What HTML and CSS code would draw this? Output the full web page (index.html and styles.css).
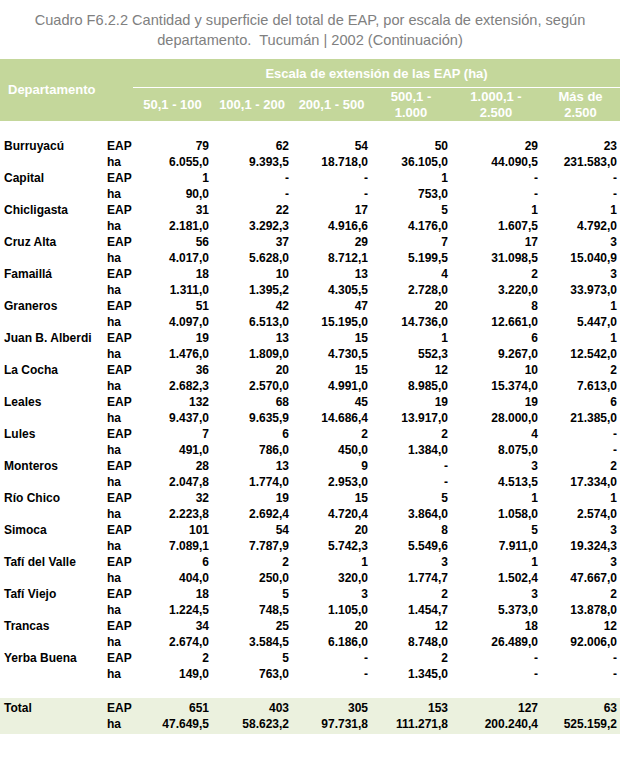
FILE: index.html
```html
<!DOCTYPE html>
<html lang="es">
<head>
<meta charset="utf-8">
<title>Cuadro F6.2.2</title>
<link rel="stylesheet" href="styles.css">
</head>
<body>
<div class="page">
  <h1 class="title">Cuadro F6.2.2 Cantidad y superficie del total de EAP, por escala de extensión, según<br>departamento.&nbsp; Tucumán | 2002 (Continuación)</h1>
  <table class="tbl">
    <colgroup>
      <col class="c-dep"><col class="c-unit"><col class="c-n1"><col class="c-n2"><col class="c-n3"><col class="c-n4"><col class="c-n5"><col class="c-n6">
    </colgroup>
    <thead>
      <tr class="h1">
        <th class="h-dep" rowspan="2" colspan="2">Departamento</th>
        <th class="h-scale" colspan="6">Escala de extensión de las EAP (ha)</th>
      </tr>
      <tr class="h2">
        <th>50,1 - 100</th>
        <th>100,1 - 200</th>
        <th>200,1 - 500</th>
        <th>500,1 -<br>1.000</th>
        <th>1.000,1 -<br>2.500</th>
        <th>Más de<br>2.500</th>
      </tr>
    </thead>
    <tbody>
      <tr class="blank top"><td colspan="8"></td></tr>
      <tr><td class="dep">Burruyacú</td><td class="unit">EAP</td><td>79</td><td>62</td><td>54</td><td>50</td><td>29</td><td>23</td></tr>
      <tr><td class="dep"></td><td class="unit">ha</td><td>6.055,0</td><td>9.393,5</td><td>18.718,0</td><td>36.105,0</td><td>44.090,5</td><td>231.583,0</td></tr>
      <tr><td class="dep">Capital</td><td class="unit">EAP</td><td>1</td><td>-</td><td>-</td><td>1</td><td>-</td><td>-</td></tr>
      <tr><td class="dep"></td><td class="unit">ha</td><td>90,0</td><td>-</td><td>-</td><td>753,0</td><td>-</td><td>-</td></tr>
      <tr><td class="dep">Chicligasta</td><td class="unit">EAP</td><td>31</td><td>22</td><td>17</td><td>5</td><td>1</td><td>1</td></tr>
      <tr><td class="dep"></td><td class="unit">ha</td><td>2.181,0</td><td>3.292,3</td><td>4.916,6</td><td>4.176,0</td><td>1.607,5</td><td>4.792,0</td></tr>
      <tr><td class="dep">Cruz Alta</td><td class="unit">EAP</td><td>56</td><td>37</td><td>29</td><td>7</td><td>17</td><td>3</td></tr>
      <tr><td class="dep"></td><td class="unit">ha</td><td>4.017,0</td><td>5.628,0</td><td>8.712,1</td><td>5.199,5</td><td>31.098,5</td><td>15.040,9</td></tr>
      <tr><td class="dep">Famaillá</td><td class="unit">EAP</td><td>18</td><td>10</td><td>13</td><td>4</td><td>2</td><td>3</td></tr>
      <tr><td class="dep"></td><td class="unit">ha</td><td>1.311,0</td><td>1.395,2</td><td>4.305,5</td><td>2.728,0</td><td>3.220,0</td><td>33.973,0</td></tr>
      <tr><td class="dep">Graneros</td><td class="unit">EAP</td><td>51</td><td>42</td><td>47</td><td>20</td><td>8</td><td>1</td></tr>
      <tr><td class="dep"></td><td class="unit">ha</td><td>4.097,0</td><td>6.513,0</td><td>15.195,0</td><td>14.736,0</td><td>12.661,0</td><td>5.447,0</td></tr>
      <tr><td class="dep">Juan B. Alberdi</td><td class="unit">EAP</td><td>19</td><td>13</td><td>15</td><td>1</td><td>6</td><td>1</td></tr>
      <tr><td class="dep"></td><td class="unit">ha</td><td>1.476,0</td><td>1.809,0</td><td>4.730,5</td><td>552,3</td><td>9.267,0</td><td>12.542,0</td></tr>
      <tr><td class="dep">La Cocha</td><td class="unit">EAP</td><td>36</td><td>20</td><td>15</td><td>12</td><td>10</td><td>2</td></tr>
      <tr><td class="dep"></td><td class="unit">ha</td><td>2.682,3</td><td>2.570,0</td><td>4.991,0</td><td>8.985,0</td><td>15.374,0</td><td>7.613,0</td></tr>
      <tr><td class="dep">Leales</td><td class="unit">EAP</td><td>132</td><td>68</td><td>45</td><td>19</td><td>19</td><td>6</td></tr>
      <tr><td class="dep"></td><td class="unit">ha</td><td>9.437,0</td><td>9.635,9</td><td>14.686,4</td><td>13.917,0</td><td>28.000,0</td><td>21.385,0</td></tr>
      <tr><td class="dep">Lules</td><td class="unit">EAP</td><td>7</td><td>6</td><td>2</td><td>2</td><td>4</td><td>-</td></tr>
      <tr><td class="dep"></td><td class="unit">ha</td><td>491,0</td><td>786,0</td><td>450,0</td><td>1.384,0</td><td>8.075,0</td><td>-</td></tr>
      <tr><td class="dep">Monteros</td><td class="unit">EAP</td><td>28</td><td>13</td><td>9</td><td>-</td><td>3</td><td>2</td></tr>
      <tr><td class="dep"></td><td class="unit">ha</td><td>2.047,8</td><td>1.774,0</td><td>2.953,0</td><td>-</td><td>4.513,5</td><td>17.334,0</td></tr>
      <tr><td class="dep">Río Chico</td><td class="unit">EAP</td><td>32</td><td>19</td><td>15</td><td>5</td><td>1</td><td>1</td></tr>
      <tr><td class="dep"></td><td class="unit">ha</td><td>2.223,8</td><td>2.692,4</td><td>4.720,4</td><td>3.864,0</td><td>1.058,0</td><td>2.574,0</td></tr>
      <tr><td class="dep">Simoca</td><td class="unit">EAP</td><td>101</td><td>54</td><td>20</td><td>8</td><td>5</td><td>3</td></tr>
      <tr><td class="dep"></td><td class="unit">ha</td><td>7.089,1</td><td>7.787,9</td><td>5.742,3</td><td>5.549,6</td><td>7.911,0</td><td>19.324,3</td></tr>
      <tr><td class="dep">Tafí del Valle</td><td class="unit">EAP</td><td>6</td><td>2</td><td>1</td><td>3</td><td>1</td><td>3</td></tr>
      <tr><td class="dep"></td><td class="unit">ha</td><td>404,0</td><td>250,0</td><td>320,0</td><td>1.774,7</td><td>1.502,4</td><td>47.667,0</td></tr>
      <tr><td class="dep">Tafí Viejo</td><td class="unit">EAP</td><td>18</td><td>5</td><td>3</td><td>2</td><td>3</td><td>2</td></tr>
      <tr><td class="dep"></td><td class="unit">ha</td><td>1.224,5</td><td>748,5</td><td>1.105,0</td><td>1.454,7</td><td>5.373,0</td><td>13.878,0</td></tr>
      <tr><td class="dep">Trancas</td><td class="unit">EAP</td><td>34</td><td>25</td><td>20</td><td>12</td><td>18</td><td>12</td></tr>
      <tr><td class="dep"></td><td class="unit">ha</td><td>2.674,0</td><td>3.584,5</td><td>6.186,0</td><td>8.748,0</td><td>26.489,0</td><td>92.006,0</td></tr>
      <tr><td class="dep">Yerba Buena</td><td class="unit">EAP</td><td>2</td><td>5</td><td>-</td><td>2</td><td>-</td><td>-</td></tr>
      <tr><td class="dep"></td><td class="unit">ha</td><td>149,0</td><td>763,0</td><td>-</td><td>1.345,0</td><td>-</td><td>-</td></tr>
      <tr class="blank"><td colspan="8"></td></tr>
      <tr class="total t1"><td class="dep">Total</td><td class="unit">EAP</td><td>651</td><td>403</td><td>305</td><td>153</td><td>127</td><td>63</td></tr>
      <tr class="total t2"><td class="dep"></td><td class="unit">ha</td><td>47.649,5</td><td>58.623,2</td><td>97.731,8</td><td>111.271,8</td><td>200.240,4</td><td>525.159,2</td></tr>
    </tbody>
  </table>
</div>
</body>
</html>
```

FILE: styles.css
```css
html, body {
  margin: 0;
  padding: 0;
  background: #ffffff;
}

.page {
  width: 620px;
  padding-top: 10px;
  font-family: "Liberation Sans", Arial, sans-serif;
}

.title {
  margin: 0 0 9px 0;
  font-size: 14.6px;
  font-weight: normal;
  line-height: 20px;
  color: #808080;
  text-align: center;
}

.tbl {
  width: 620px;
  border-collapse: collapse;
  border-spacing: 0;
  table-layout: fixed;
}

.c-dep { width: 105px; }
.c-unit { width: 28px; }
.c-n1 { width: 79px; }
.c-n2 { width: 80px; }
.c-n3 { width: 79px; }
.c-n4 { width: 80px; }
.c-n5 { width: 90px; }
.c-n6 { width: 79px; }

.tbl th {
  padding: 0;
  background: #c4d79b;
  color: #ffffff;
  font-size: 13px;
  font-weight: bold;
  line-height: 16px;
  text-align: center;
}

.tbl th.h-dep {
  text-align: left;
  padding-left: 8px;
  vertical-align: middle;
}

.tbl .h1 th.h-scale {
  height: 27px;
  padding-top: 1px;
  border-bottom: 1px solid #ffffff;
}

.tbl .h2 th {
  height: 33px;
  vertical-align: middle;
}

.tbl td {
  padding: 0 3px 0 0;
  height: 16px;
  font-size: 12px;
  font-weight: bold;
  line-height: 16px;
  color: #000000;
  text-align: right;
  white-space: nowrap;
}

.tbl td.dep {
  text-align: left;
  padding-left: 4px;
}

.tbl td.unit {
  text-align: left;
  padding-left: 2px;
  padding-right: 0;
}

.tbl tr.blank td {
  height: 16px;
  padding: 0;
}

.tbl tr.blank.top td {
  height: 17px;
}

.tbl tr.total td {
  background: #ebf1de;
}

.tbl tr.t1 td {
  height: 16px;
  padding-top: 2px;
}

.tbl tr.t2 td {
  height: 16px;
  padding-bottom: 2px;
}
```
